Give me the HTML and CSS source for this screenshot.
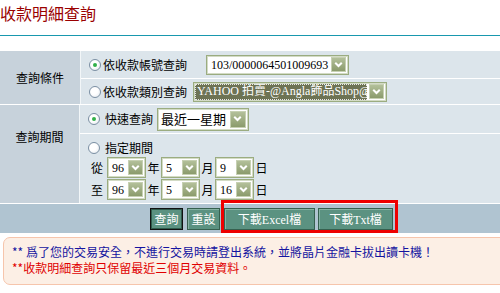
FILE: index.html
```html
<!DOCTYPE html>
<html lang="zh-Hant">
<head>
    <meta charset="UTF-8">
    <meta name="viewport" content="width=device-width, initial-scale=1.0">
    <title>收款明細查詢</title>
    <link rel="stylesheet" href="styles.css">
</head>
<body>
    <h1 class="page-title">收款明細查詢</h1>

    <div class="query">
        <div class="group">
            <div class="group-label">查詢條件</div>
            <div class="group-body">
                <div class="row row-account">
                    <span class="radio checked"></span>
                    <span class="opt-text">依收款帳號查詢</span>
                    <span class="select select-account">
                        <span class="select-value">103/0000064501009693</span>
                        <span class="select-arrow"><svg viewBox="0 0 14 14"><path d="M3.5 5.2 L7 8.7 L10.5 5.2"/></svg></span>
                    </span>
                </div>
                <div class="row row-type">
                    <span class="radio"></span>
                    <span class="opt-text">依收款類別查詢</span>
                    <span class="select select-type">
                        <span class="select-value">YAHOO 拍賣-@Angla飾品Shop@</span>
                        <span class="select-arrow"><svg viewBox="0 0 14 14"><path d="M3.5 5.2 L7 8.7 L10.5 5.2"/></svg></span>
                    </span>
                </div>
            </div>
        </div>

        <div class="group">
            <div class="group-label group-label-top">查詢期間</div>
            <div class="group-body">
                <div class="row row-quick">
                    <span class="radio checked"></span>
                    <span class="opt-text wide">快速查詢</span>
                    <span class="select select-range">
                        <span class="select-value">最近一星期</span>
                        <span class="select-arrow"><svg viewBox="0 0 14 14"><path d="M3.5 5.2 L7 8.7 L10.5 5.2"/></svg></span>
                    </span>
                </div>
                <div class="row row-period">
                    <div class="period-head">
                        <span class="radio"></span>
                        <span class="opt-text wide">指定期間</span>
                    </div>
                    <div class="date-line">
                        <span class="date-word">從</span>
                        <span class="select select-date">
                            <span class="select-value">96</span>
                            <span class="select-arrow"><svg viewBox="0 0 14 14"><path d="M3.5 5.2 L7 8.7 L10.5 5.2"/></svg></span>
                        </span>
                        <span class="date-unit">年</span>
                        <span class="select select-date">
                            <span class="select-value">5</span>
                            <span class="select-arrow"><svg viewBox="0 0 14 14"><path d="M3.5 5.2 L7 8.7 L10.5 5.2"/></svg></span>
                        </span>
                        <span class="date-unit">月</span>
                        <span class="select select-date">
                            <span class="select-value">9</span>
                            <span class="select-arrow"><svg viewBox="0 0 14 14"><path d="M3.5 5.2 L7 8.7 L10.5 5.2"/></svg></span>
                        </span>
                        <span class="date-unit">日</span>
                    </div>
                    <div class="date-line">
                        <span class="date-word">至</span>
                        <span class="select select-date">
                            <span class="select-value">96</span>
                            <span class="select-arrow"><svg viewBox="0 0 14 14"><path d="M3.5 5.2 L7 8.7 L10.5 5.2"/></svg></span>
                        </span>
                        <span class="date-unit">年</span>
                        <span class="select select-date">
                            <span class="select-value">5</span>
                            <span class="select-arrow"><svg viewBox="0 0 14 14"><path d="M3.5 5.2 L7 8.7 L10.5 5.2"/></svg></span>
                        </span>
                        <span class="date-unit">月</span>
                        <span class="select select-date">
                            <span class="select-value">16</span>
                            <span class="select-arrow"><svg viewBox="0 0 14 14"><path d="M3.5 5.2 L7 8.7 L10.5 5.2"/></svg></span>
                        </span>
                        <span class="date-unit">日</span>
                    </div>
                </div>
            </div>
        </div>

        <div class="actions">
            <button class="btn btn-default btn-short">查詢</button>
            <button class="btn btn-short">重設</button>
            <button class="btn btn-excel">下載Excel檔</button>
            <button class="btn btn-txt">下載Txt檔</button>
            <div class="highlight"></div>
        </div>
    </div>

    <div class="notice">
        <p class="notice-blue">** 爲了您的交易安全，不進行交易時請登出系統，並將晶片金融卡拔出讀卡機！</p>
        <p class="notice-red">**收款明細查詢只保留最近三個月交易資料。</p>
    </div>
</body>
</html>
```

FILE: styles.css
```css
body {
    margin: 0;
    font-family: "Liberation Serif", "Noto Sans CJK TC", serif;
    font-size: 12px;
    color: #000;
    background-color: #fff;
    overflow: hidden;
}

.page-title {
    margin: 0 0 15px 0;
    height: 35px;
    font-family: "Noto Sans CJK TC", sans-serif;
    font-size: 16px;
    font-weight: normal;
    line-height: 27px;
    color: #9a0000;
    border-bottom: 1px solid #1898ae;
}

/* query table */
.query {
    background-color: #dce5eb;
}
.group {
    display: flex;
    border-bottom: 1px solid #fff;
}
.group-label {
    width: 80px;
    flex: none;
    display: flex;
    align-items: center;
    justify-content: center;
    background-color: #c7d2db;
    border-right: 1px solid #f2f6f8;
    font-family: "Noto Sans CJK TC", sans-serif;
    line-height: 16px;
}
.group-label-top {
    align-items: flex-start;
    padding-top: 24px;
    box-sizing: border-box;
}
.group-body {
    flex: 1;
}
.row {
    display: flex;
    align-items: center;
    padding-left: 8px;
    border-bottom: 1px solid #fff;
    font-family: "Noto Sans CJK TC", sans-serif;
}
.row:last-child {
    border-bottom: none;
}
.row-account { height: 27px; }
.row-type { height: 25px; }
.row-quick { height: 28px; }
.row-period {
    height: 69px;
    flex-direction: column;
    align-items: flex-start;
    padding-top: 4px;
    box-sizing: border-box;
}

.radio {
    width: 12px;
    height: 12px;
    box-sizing: border-box;
    flex: none;
    border: 1px solid #7b8fa3;
    border-radius: 50%;
    background: radial-gradient(circle at 40% 40%, #fff 40%, #dfe5ea 100%);
    position: relative;
}
.radio.checked::after {
    content: "";
    position: absolute;
    left: 3px;
    top: 3px;
    width: 4px;
    height: 4px;
    border-radius: 50%;
    background-color: #32b04a;
}
.opt-text {
    margin-left: 2px;
    line-height: 16px;
}
.opt-text.wide {
    margin-left: 5px;
}

/* fake select boxes */
.select {
    display: inline-flex;
    align-items: center;
    box-sizing: border-box;
    height: 20px;
    padding: 1px 2px 1px 1px;
    background-color: #fff;
    border: 1px solid #9bac80;
    box-shadow: inset 0 0 0 1px #d3dbc5;
    font-family: "Liberation Serif", "Noto Sans CJK TC", serif;
    font-size: 12px;
}
.select-value {
    flex: 1;
    overflow: hidden;
    white-space: nowrap;
    padding-left: 3px;
    line-height: 16px;
}
.select-arrow {
    width: 15px;
    height: 15px;
    flex: none;
    margin-left: 2px;
    box-sizing: border-box;
    border: 1px solid #c6d0b2;
    background: linear-gradient(#b3c09a, #8b9b6c);
}
.select-arrow svg {
    display: block;
    width: 13px;
    height: 13px;
}
.select-arrow path {
    fill: none;
    stroke: #fff;
    stroke-width: 2.2;
}

.select-account {
    width: 143px;
    margin-left: 19px;
}
.select-type {
    width: 194px;
    margin-left: 6px;
}
.select-type .select-value {
    align-self: stretch;
    padding-left: 2px;
    line-height: 15px;
    color: #fff;
    background-color: #6d7354;
    outline: 1px dotted #e8e8e8;
    outline-offset: -1px;
}
.select-range {
    width: 92px;
    height: 23px;
    margin-left: 4px;
    font-family: "Noto Sans CJK TC", sans-serif;
    font-size: 13px;
}
.select-range .select-value {
    padding-left: 2px;
    overflow: visible;
}
.select-range .select-arrow {
    width: 16px;
    height: 17px;
    margin-left: 1px;
}
.select-date {
    width: 39px;
    height: 21px;
}

.period-head {
    display: flex;
    align-items: center;
    height: 19px;
}
.date-line {
    display: flex;
    align-items: center;
    height: 21px;
    margin-bottom: 1px;
    padding-left: 3px;
}
.date-word {
    width: 16px;
    line-height: 16px;
}
.date-unit {
    width: 15px;
    text-align: center;
    line-height: 16px;
}

/* buttons row */
.actions {
    display: flex;
    gap: 4px;
    height: 29px;
    box-sizing: border-box;
    padding: 4px 0 0 150px;
    background-color: #b0c4d1;
    position: relative;
}
.btn {
    height: 22px;
    padding: 0;
    font-family: "Liberation Serif", "Noto Sans CJK TC", serif;
    font-size: 12px;
    color: #fff;
    background-color: #5b9281;
    border: 1px solid #36604f;
    box-shadow: inset 1px 1px 0 #86b3a4;
    cursor: pointer;
}
.btn-default {
    border: 1px solid #111;
    box-shadow: inset 0 0 0 1px #2f5b4c;
}
.btn-short { width: 33px; }
.btn-excel { width: 91px; }
.btn-txt { width: 75px; margin-left: -1px; }

.highlight {
    position: absolute;
    left: 221px;
    top: -4px;
    width: 177px;
    height: 33px;
    box-sizing: border-box;
    border: 3px solid #ee0000;
}

/* notice box */
.notice {
    margin: 4px -8px 0 3px;
    height: 48px;
    box-sizing: border-box;
    padding: 6px 8px 0;
    background-color: #fcefe5;
    border: 1px solid #f6c5ac;
    border-radius: 7px;
    font-family: "Noto Sans CJK TC", sans-serif;
    line-height: 16px;
}
.notice p {
    margin: 0;
}
.notice-blue {
    color: #1414a0;
}
.notice-red {
    color: #e00000;
}
```
